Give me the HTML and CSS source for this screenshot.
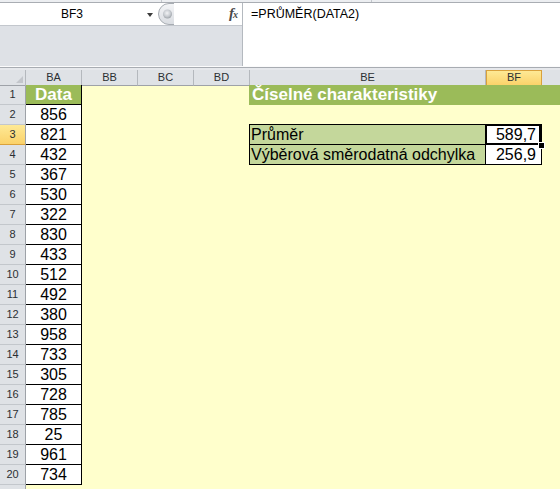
FILE: index.html
```html
<!DOCTYPE html>
<html lang="cs">
<head>
<meta charset="utf-8">
<title>Číselné charakteristiky</title>
<link rel="stylesheet" href="styles.css">
</head>
<body>
<div class="app">
  <div class="topstrip"><span class="seg s1"></span><span class="seg s2"></span><span class="seg s3"></span></div>
  <div class="fbar">
    <div class="fleft">
      <div class="frow">
        <div class="namebox"><span class="nbtext">BF3</span><span class="nbarrow"></span></div>
        <div class="fxarea">
          <svg class="grip" width="16" height="22" viewBox="0 0 16 22">
            <defs>
              <linearGradient id="gg" x1="0" y1="0" x2="0" y2="1"><stop offset="0" stop-color="#f4f5f7"/><stop offset="1" stop-color="#d9dce1"/></linearGradient>
              <radialGradient id="dg" cx="0.45" cy="0.4" r="0.6"><stop offset="0" stop-color="#f2f3f5"/><stop offset="0.6" stop-color="#c9cdd2"/><stop offset="1" stop-color="#9fa4aa"/></radialGradient>
            </defs>
            <path d="M16 0.5 H11 A10.5 10.5 0 0 0 11 21.5 H16" fill="url(#gg)" stroke="#a7acb2"/>
            <circle cx="9.5" cy="11" r="4.5" fill="url(#dg)"/>
          </svg>
          <span class="fx">f<span class="fxsub">x</span></span>
        </div>
      </div>
      <div class="fpanel"></div>
    </div>
    <div class="formula">=PRŮMĚR(DATA2)</div>
  </div>
  <div class="sep"></div>
  <div class="sheet">
    <div class="hrow">
      <div class="hc corner"><span class="tri"></span></div>
      <div class="hc">BA</div>
      <div class="hc">BB</div>
      <div class="hc">BC</div>
      <div class="hc">BD</div>
      <div class="hc">BE</div>
      <div class="hc sel">BF</div>
      <div class="hc last"></div>
    </div>
    <div class="row"><div class="rh">1</div><div class="ba head">Data</div><div class="title">Číselné charakteristiky</div></div>
    <div class="row"><div class="rh">2</div><div class="ba">856</div></div>
    <div class="row"><div class="rh sel">3</div><div class="ba">821</div><div class="lbl">Průměr</div><div class="val">589,7</div></div>
    <div class="row"><div class="rh">4</div><div class="ba">432</div><div class="lbl">Výběrová směrodatná odchylka</div><div class="val">256,9</div></div>
    <div class="row"><div class="rh">5</div><div class="ba">367</div></div>
    <div class="row"><div class="rh">6</div><div class="ba">530</div></div>
    <div class="row"><div class="rh">7</div><div class="ba">322</div></div>
    <div class="row"><div class="rh">8</div><div class="ba">830</div></div>
    <div class="row"><div class="rh">9</div><div class="ba">433</div></div>
    <div class="row"><div class="rh">10</div><div class="ba">512</div></div>
    <div class="row"><div class="rh">11</div><div class="ba">492</div></div>
    <div class="row"><div class="rh">12</div><div class="ba">380</div></div>
    <div class="row"><div class="rh">13</div><div class="ba">958</div></div>
    <div class="row"><div class="rh">14</div><div class="ba">733</div></div>
    <div class="row"><div class="rh">15</div><div class="ba">305</div></div>
    <div class="row"><div class="rh">16</div><div class="ba">728</div></div>
    <div class="row"><div class="rh">17</div><div class="ba">785</div></div>
    <div class="row"><div class="rh">18</div><div class="ba">25</div></div>
    <div class="row"><div class="rh">19</div><div class="ba">961</div></div>
    <div class="row"><div class="rh">20</div><div class="ba">734</div></div>
    <div class="row"><div class="rh"></div></div>
    <div class="selection"></div>
    <div class="handle"></div>
  </div>
</div>
</body>
</html>
```
FILE: styles.css
```css
* { box-sizing: border-box; margin: 0; padding: 0; }
html, body { width: 560px; height: 489px; overflow: hidden; background: #ffffcc; }
body { font-family: "Liberation Sans", Arial, sans-serif; color: #000; }

.app { width: 560px; height: 489px; overflow: hidden; display: flex; flex-direction: column; }

.topstrip { flex: none; height: 3px; display: flex; background: #eceef1; border-bottom: 1px solid #a9adb3; }
.seg { height: 2px; border-right: 1px solid #c3c7cc; }
.s1 { width: 162px; }
.s2 { width: 210px; }
.s3 { flex: 1; border-right: 0; }

.fbar { flex: none; height: 63px; display: flex; }
.fleft { width: 243px; display: flex; flex-direction: column; background: #dee1e6; border-right: 1px solid #b4b9bf; }
.frow { height: 23px; display: flex; background: #fff; border-bottom: 1px solid #c3c7cd; }
.namebox { width: 158px; display: flex; align-items: center; }
.nbtext { width: 144px; text-align: center; font-size: 12px; line-height: 22px; }
.nbarrow { width: 0; height: 0; border-left: 3.5px solid transparent; border-right: 3.5px solid transparent; border-top: 4px solid #3c3c3c; margin-left: 3px; margin-top: 1px; }
.fxarea { flex: 1; display: flex; align-items: flex-start; justify-content: space-between; }
.grip { display: block; }
.fx { font-family: "Liberation Serif", serif; font-style: italic; font-weight: bold; font-size: 15px; line-height: 20px; color: #4a4a4a; margin-right: 5px; letter-spacing: -1px; }
.fxsub { font-size: 10px; }
.fpanel { flex: 1; }

.formula { flex: 1; background: #fff; padding-left: 8px; font-size: 12.5px; line-height: 22px; }

.sep { flex: none; height: 4px; background: linear-gradient(#fbfbfc 0 1px, #a8acb2 1px 2px, #e6e8ec 2px); }

.sheet { flex: 1; position: relative; background: #ffffcc; }

.hrow, .row { display: grid; grid-template-columns: 26px 56px 56px 56px 56px 236px 56px 1fr; }
.hrow { height: 15px; }
.row { height: 20px; }

.hc { background: #dfe2e6; border-right: 1px solid #b4b8bd; border-bottom: 1px solid #9ea2a8; font-size: 11px; line-height: 15px; text-align: center; color: #2b2f33; }
.hc.sel { background: linear-gradient(#fee995, #fbd26a); border: 1px solid #d9a13c; line-height: 13px; }
.hc.last { border-right: 0; }
.corner { position: relative; }
.tri { position: absolute; right: 2px; bottom: 2px; width: 0; height: 0; border-left: 7px solid transparent; border-bottom: 7px solid #c3c6cb; }

.rh { background: #dfe2e6; border-right: 1px solid #9ea2a8; border-bottom: 1px solid #c3c7cc; font-size: 11px; line-height: 19px; text-align: center; color: #2b2f33; }
.rh.sel { background: linear-gradient(#fee995, #fbd26a); border-bottom-color: #d9a13c; }

.ba { background: #fff; border-right: 1px solid #000; border-bottom: 1px solid #000; font-size: 16px; line-height: 19px; text-align: center; }
.ba.head { background: #9bbb59; color: #fff; font-weight: bold; font-size: 17px; }

.title { grid-column: 6 / -1; background: #9bbb59; box-shadow: -1px 0 0 #9bbb59; color: #fff; font-weight: bold; font-size: 17px; line-height: 20px; padding-left: 2px; white-space: nowrap; }

.lbl { grid-column: 6; background: #c4d79b; border-right: 1px solid #000; border-bottom: 1px solid #000; box-shadow: -1px -1px 0 #000, -1px 0 0 #000; font-size: 16px; line-height: 19px; padding-left: 1px; white-space: nowrap; }
.val { grid-column: 7; background: #fff; border-right: 1px solid #000; border-bottom: 1px solid #000; box-shadow: 0 -1px 0 #000; font-size: 16px; line-height: 19px; text-align: right; padding-right: 5px; }

.selection { position: absolute; left: 485px; top: 54px; width: 56px; height: 21px; border: 2px solid #000; }
.handle { position: absolute; left: 538px; top: 72px; width: 7px; height: 7px; background: #000; border: 1px solid #fff; }
```
